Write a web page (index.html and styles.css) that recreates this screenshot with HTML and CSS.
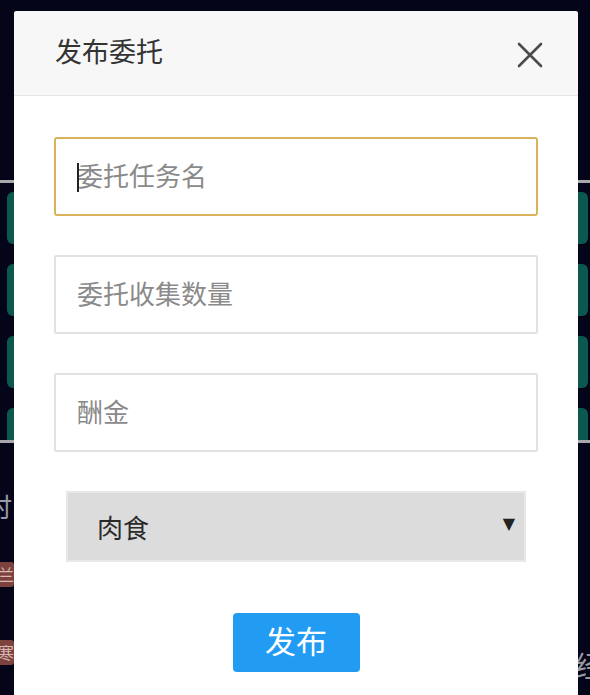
FILE: index.html
```html
<!DOCTYPE html>
<html lang="zh">
<head>
<meta charset="utf-8">
<link rel="stylesheet" href="styles.css">
</head>
<body>
<div class="page">
  <div class="top-space"></div>
  <div class="list">
    <div class="row"></div>
    <div class="row"></div>
    <div class="row"></div>
    <div class="row"></div>
  </div>
  <div class="lower">
    <div class="label">时田</div>
    <div class="tag tag1">兰</div>
    <div class="tag tag2">寒</div>
    <div class="right-char">经</div>
  </div>
</div>

<div class="modal">
  <div class="modal-header">
    <h2 class="modal-title">发布委托</h2>
    <svg class="close" width="26" height="26" viewBox="0 0 26 26">
      <path d="M2 2 L24 24 M24 2 L2 24" stroke="#4a4a4f" stroke-width="2.6" stroke-linecap="round" fill="none"/>
    </svg>
  </div>
  <div class="modal-body">
    <div class="field focused"><span class="caret"></span><span class="ph">委托任务名</span></div>
    <div class="field"><span class="ph">委托收集数量</span></div>
    <div class="field"><span class="ph">酬金</span></div>
    <div class="select"><span class="sel-text">肉食</span><span class="arrow">▼</span></div>
    <div class="btn-wrap"><button class="btn">发布</button></div>
  </div>
</div>
</body>
</html>
```
FILE: styles.css
```css
html, body {
  margin: 0;
  padding: 0;
  background: #05051a;
  width: 590px;
  height: 695px;
  overflow: hidden;
  font-family: "Noto Sans CJK SC", "Noto Sans", sans-serif;
}
.page {
  position: relative;
  width: 590px;
  height: 695px;
}
.top-space {
  height: 180px;
}
.list {
  box-sizing: border-box;
  height: 263px;
  border-top: 3px solid #a9a9ad;
  border-bottom: 3px solid #a9a9ad;
  overflow: hidden;
  padding: 9px 2px 0 7px;
  display: flex;
  flex-direction: column;
  gap: 20px;
}
.row {
  flex: none;
  height: 52px;
  background: #0d584e;
  border-radius: 6px;
}
.lower {
  position: relative;
  height: 252px;
}
.label {
  position: absolute;
  left: -14px;
  top: 48px;
  color: #9a9aa6;
  font-size: 26px;
  line-height: 30px;
}
.tag {
  position: absolute;
  left: -10px;
  width: 24px;
  height: 25px;
  background: #7d423e;
  color: #d8b8b4;
  font-size: 16px;
  line-height: 25px;
  text-align: right;
  border-radius: 3px;
}
.tag1 { top: 119px; }
.tag2 { top: 197px; }
.right-char {
  position: absolute;
  left: 575px;
  top: 205px;
  color: #9a9aa6;
  font-size: 28px;
  line-height: 34px;
}
.modal {
  position: absolute;
  left: 14px;
  top: 11px;
  width: 564px;
  height: 700px;
  background: #fff;
  border-radius: 3px 3px 0 0;
}
.modal-header {
  height: 84px;
  background: #f7f7f7;
  border-bottom: 1px solid #e6e6e6;
  border-radius: 3px 3px 0 0;
  display: flex;
  align-items: center;
  justify-content: space-between;
  padding: 0 35px 0 41px;
}
.modal-title {
  margin: 0;
  font-size: 27px;
  font-weight: 400;
  color: #333;
  line-height: 34px;
  margin-top: -4px;
}
.close {
  display: block;
  margin-top: 4px;
}
.modal-body {
  padding: 41px 40px 0 40px;
  display: flex;
  flex-direction: column;
}
.field {
  height: 79px;
  box-sizing: border-box;
  border: 2px solid #e2e2e2;
  border-radius: 2px;
  display: flex;
  align-items: center;
  padding-left: 21px;
  margin-bottom: 39px;
  position: relative;
}
.field.focused {
  border-color: #d9b45c;
  border-radius: 3px;
}
.ph {
  font-size: 26px;
  color: #8a8a8a;
  line-height: 34px;
  margin-top: -3px;
}
.caret {
  position: absolute;
  left: 21px;
  top: 24px;
  width: 2px;
  height: 29px;
  background: #222;
}
.select {
  margin: 0 12px;
  height: 71px;
  box-sizing: border-box;
  background: #dcdcdc;
  border: 2px solid #e8e8e8;
  display: flex;
  align-items: center;
  justify-content: space-between;
  padding: 0 9px 0 29px;
}
.sel-text {
  font-size: 26px;
  color: #2a2a2a;
  line-height: 34px;
}
.arrow {
  font-size: 16px;
  color: #222;
  margin-top: -6px;
  font-family: "DejaVu Sans", sans-serif;
}
.btn-wrap {
  display: flex;
  justify-content: center;
  padding-top: 51px;
}
.btn {
  width: 127px;
  height: 59px;
  border: none;
  border-radius: 4px;
  background: #229bf3;
  color: #fff;
  font-family: "Noto Sans CJK SC", "Noto Sans", sans-serif;
  font-size: 31px;
  line-height: 40px;
  padding: 0 0 5px 0;
}
```
